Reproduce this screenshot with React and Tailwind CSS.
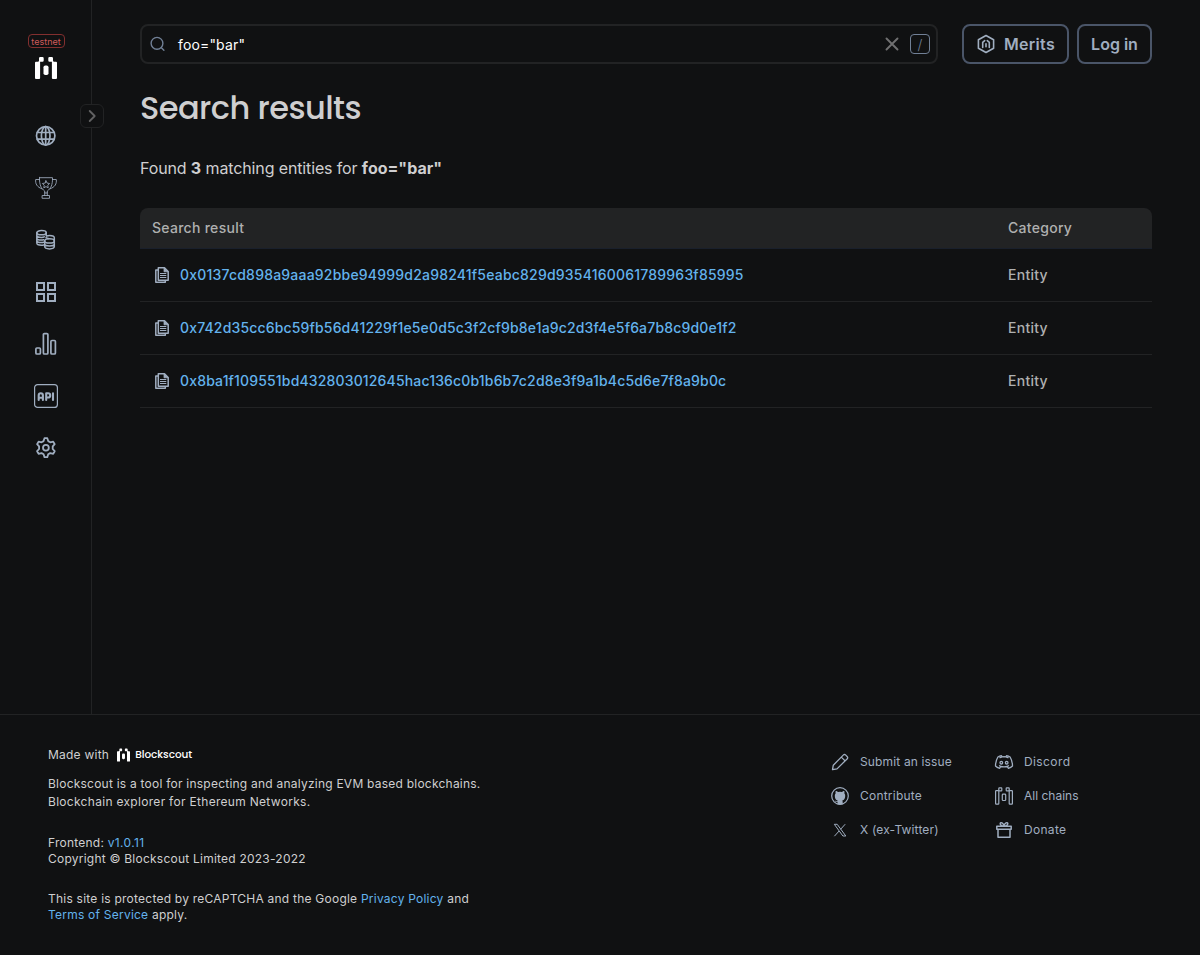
import React from "react";

const rows = [
  { hash: "0x0137cd898a9aaa92bbe94999d2a98241f5eabc829d9354160061789963f85995", tracking: "tracking-[0.205px]" },
  { hash: "0x742d35cc6bc59fb56d41229f1e5e0d5c3f2cf9b8e1a9c2d3f4e5f6a7b8c9d0e1f2", tracking: "tracking-[0.162px]" },
  { hash: "0x8ba1f109551bd432803012645hac136c0b1b6b7c2d8e3f9a1b4c5d6e7f8a9b0c", tracking: "tracking-[0.16px]" },
];

const stroke = { fill: "none", stroke: "currentColor", strokeLinecap: "round", strokeLinejoin: "round" };

function Logo({ className }) {
  return (
    <svg className={className} viewBox="0 0 22 22" fill="currentColor">
      <path d="M4 1.200A1.200 1.200 0 0 1 5.200 0h2.300a1.200 1.200 0 0 1 1.200 1.200v2.300a1.200 1.200 0 0 1-1.200 1.200H5.100V21a1 1 0 0 1-1 1H1a1 1 0 0 1-1-1V5.700a1 1 0 0 1 1-1h1.800A1.200 1.200 0 0 0 4 3.500z" />
      <path d="M18 1.200A1.200 1.200 0 0 0 16.800 0h-2.300a1.200 1.200 0 0 0-1.200 1.200v2.300a1.200 1.200 0 0 0 1.200 1.200h2.400V21a1 1 0 0 0 1 1H21a1 1 0 0 0 1-1V5.700a1 1 0 0 0-1-1h-1.800A1.200 1.200 0 0 1 18 3.500z" />
      <rect x="8.500" y="8.500" width="5" height="9.500" rx="1.800" />
    </svg>
  );
}

function Globe() {
  return (
    <svg className="size-6" viewBox="0 0 24 24" {...stroke} strokeWidth="1.700">
      <circle cx="11.700" cy="11.800" r="9.200" />
      <ellipse cx="11.700" cy="11.800" rx="4.300" ry="9.200" />
      <path d="M11.700 2.600V21M3.400 8.500h16.600M3.400 15.200h16.600" />
    </svg>
  );
}

function Trophy() {
  return (
    <svg className="size-6" viewBox="0 0 24 24" {...stroke} strokeWidth=".85">
      <path d="M5.500 1.700h13c.2 7-1.500 10.800-5.200 13.300v2h-2.600v-2C7 12.500 5.300 8.700 5.500 1.700z" />
      <path d="M5.500 3.500H1.700c-.5 4.300 1.300 7.600 6.200 9.300M18.500 3.500h3.800c.5 4.300-1.300 7.600-6.200 9.300M10.700 17v2.500M13.300 17v2.500M8.500 19.500h7v2.800h-7z" />
      <path d="M12 4.800l1.100 2.300 2.500.4-1.800 1.800.4 2.500-2.200-1.200-2.200 1.200.4-2.500-1.800-1.800 2.500-.4z" />
    </svg>
  );
}

function Coins() {
  return (
    <svg className="size-6" viewBox="0 0 24 24" {...stroke} strokeWidth="1.500">
      <ellipse cx="7.500" cy="4.700" rx="4.700" ry="2.100" />
      <path d="M2.800 4.700v10.400c0 1.300 2 2.200 4.700 2.200.8 0 1.500-.1 2.200-.3M12.200 4.700v3M2.800 7.300c0 1.300 2 2.100 4.700 2.100 1.100 0 2-.1 2.800-.5M2.800 9.900c0 1.300 2 2.100 4.700 2.100.8 0 1.500-.1 2.200-.3M2.800 12.500c0 1.300 2 2.100 4.700 2.100.8 0 1.500-.1 2.200-.3" />
      <ellipse cx="15.500" cy="12.900" rx="4.800" ry="2.200" />
      <path d="M10.700 12.900v5.700c0 1.300 2.100 2.300 4.800 2.300s4.800-1 4.800-2.300V9.800c0-1.300-2-2.300-4.700-2.300-1.200 0-2.200.2-3 .5M10.700 15.800c0 1.300 2.100 2.200 4.800 2.200s4.800-1 4.800-2.200M12 9.700c.8.500 1.600.7 2.500.7" />
    </svg>
  );
}

function Apps() {
  return (
    <svg className="size-6" viewBox="0 0 24 24" fill="none" stroke="currentColor" strokeWidth="2">
      <path d="M3 3h7v7H3zM14 3h7v7h-7zM3 14h7v7H3zM14 14h7v7h-7z" />
    </svg>
  );
}

function Stats() {
  return (
    <svg className="size-6" viewBox="0 0 24 24" fill="none" stroke="currentColor" strokeWidth="1.700">
      <rect x="1.900" y="16" width="4.500" height="6" rx="1" />
      <rect x="9.400" y="1.600" width="4.500" height="20.400" rx="1" />
      <rect x="16.900" y="8.500" width="4.500" height="13.500" rx="1" />
    </svg>
  );
}

function ApiIcon() {
  return (
    <svg className="size-6" viewBox="0 0 24 24" {...stroke} strokeWidth="1.200">
      <rect x=".6" y=".6" width="22.800" height="22.800" rx="3" />
      <g strokeWidth="2.100">
        <path d="M4.700 16v-4.600c0-1.300.8-2.100 2.100-2.100s2.100.8 2.100 2.100V16M4.700 13.700h4.200M12.200 16V9.300h1.900a2.100 2.100 0 0 1 0 4.200h-1.900M19 9.300V16" />
      </g>
    </svg>
  );
}

function Gear() {
  return (
    <svg className="size-6" viewBox="0 0 24 24" {...stroke} strokeWidth="1.800">
      <circle cx="11.900" cy="11.700" r="2.900" />
      <path d="M10.500 2.200h2.800l.9 2.900 2.100 1.200 2.900-.7 1.500 2.600-2 2.200v2.600l2 2.200-1.500 2.600-2.900-.7-2.100 1.200-.9 2.900h-2.800l-.9-2.900-2.100-1.200-2.900.7-1.500-2.600 2-2.200v-2.600l-2-2.200 1.500-2.600 2.900.7 2.100-1.200z" />
    </svg>
  );
}

function Docs() {
  return (
    <svg className="size-5 text-[#a0aec0]" viewBox="0 0 20 20" fill="none" stroke="currentColor" strokeWidth="1.500">
      <path d="M6.300 2.800h6.200l3.700 3.700v8.700H6.300z" strokeLinejoin="round" />
      <path d="M12 2.800v4h4.200z" fill="currentColor" strokeWidth=".8" />
      <path d="M6.300 5H3.800v12.200h9.500v-2" strokeLinejoin="round" />
      <path d="M8 8.500h6.300M8 10.500h6.300M8 12.500h6.300" strokeWidth="1" />
    </svg>
  );
}

function MeritsIcon() {
  return (
    <svg className="size-5" viewBox="0 0 20 20" {...stroke} strokeWidth="1.600">
      <path d="M10 1.500l7.600 4.300v8.400L10 18.500l-7.600-4.300V5.800z" />
      <path d="M6.700 13.500V8.300l2-1.700M13.300 13.500V8.300l-2-1.700M10 9.700v3" strokeWidth="1.600" />
    </svg>
  );
}

function Pencil() {
  return (
    <svg className="size-5" viewBox="0 0 20 20" {...stroke} strokeWidth="1.300">
      <path d="M2.500 17.700l.8-4.500L13.500 2.900a1.400 1.400 0 0 1 2 0l1.800 1.800a1.400 1.400 0 0 1 0 2L7 16.900zM11.300 5.100l3.800 3.800" />
    </svg>
  );
}

function Github() {
  return (
    <svg className="size-5" viewBox="0 0 20 20">
      <circle cx="10" cy="10" r="8.300" fill="none" stroke="currentColor" strokeWidth="1.200" />
      <path fill="currentColor" d="M7.500 18.500v-2.700c-1.800.4-2.500-.6-2.800-1.400.9-.1 1.300.9 2.100.9.400 0 .7-.2.900-.7C5.700 14 4.800 12.500 4.800 9.800c0-.9.200-1.700.8-2.300-.2-.8-.1-1.700.1-2.500 1 0 1.700.5 2.500 1a8 8 0 0 1 3.600 0c.8-.5 1.500-1 2.500-1 .2.800.3 1.700.1 2.500.6.600.8 1.400.8 2.300 0 2.700-.9 4.200-2.900 4.800.3.400.4.900.4 1.600v2.300z" />
    </svg>
  );
}

function XIcon() {
  return (
    <svg className="size-5" viewBox="0 0 20 20" fill="none" stroke="currentColor" strokeWidth="1">
      <path d="M4.300 4.300h2.900l8.600 11.700h-2.900zM15.200 4.200l-4.700 5.200M9.100 11l-4.700 5.200" />
    </svg>
  );
}

function Discord() {
  return (
    <svg className="size-5" viewBox="0 0 20 20" {...stroke} strokeWidth="1.300">
      <path d="M7.500 3.700c-1.500.2-2.500.6-3.600 1.300C2.300 7.700 1.500 10.700 1.500 14c1.100 1.200 2.500 1.900 4.200 2.300l1-1.800c2.200.6 4.400.6 6.600 0l1 1.800c1.700-.4 3.100-1.100 4.200-2.300 0-3.300-.8-6.300-2.400-9-1.100-.7-2.100-1.100-3.600-1.300l-.6 1.200a11 11 0 0 0-3.800 0zM5.500 13.800l1.200.7M14.500 13.800l-1.200.7M6 5.700l1.500-.6M14 5.700l-1.500-.6" />
      <circle cx="7.300" cy="10.700" r="1.300" />
      <circle cx="12.700" cy="10.700" r="1.300" />
    </svg>
  );
}

function Chains() {
  return (
    <svg className="size-5" viewBox="0 0 20 20" fill="none" stroke="currentColor" strokeWidth="1.200" strokeLinejoin="round">
      <rect x="1.600" y="4.700" width="3.200" height="13.500" rx=".6" />
      <rect x="15.200" y="4.700" width="3.200" height="13.500" rx=".6" />
      <rect x="4.800" y="1.800" width="3" height="3.100" rx=".6" />
      <rect x="12.200" y="1.800" width="3" height="3.100" rx=".6" />
      <rect x="8.300" y="8.200" width="3.400" height="6.300" rx=".8" />
    </svg>
  );
}

function Gift() {
  return (
    <svg className="size-5" viewBox="0 0 20 20" fill="none" stroke="currentColor" strokeWidth="1.500" strokeLinejoin="round">
      <path d="M2.800 6.200h14.400v3H2.800zM4 9.200h12v8H4zM10 6c-2 0-4-1-3.800-2.600C6.500 2 9.500 2.500 10 6zM10 6c2 0 4-1 3.800-2.600C13.500 2 10.500 2.500 10 6z" />
    </svg>
  );
}

const nav = [Globe, Trophy, Coins, Apps, Stats, ApiIcon, Gear];
const linkColumns = [
  [
    [Pencil, "Submit an issue", "tracking-[0.15px]"],
    [Github, "Contribute", "tracking-[0.22px]"],
    [XIcon, "X (ex-Twitter)", "tracking-[0.16px]"],
  ],
  [
    [Discord, "Discord", "tracking-[0.4px]"],
    [Chains, "All chains", "tracking-normal"],
    [Gift, "Donate", "tracking-[0.3px]"],
  ],
];

export default function App() {
  return (
    <div className="flex h-[955px] flex-col bg-[#101112] font-['Inter',sans-serif] text-base text-[#cfcfd0]">
      <div className="flex h-[714px]">
        <aside className="relative flex w-[92px] shrink-0 flex-col items-center border-r border-[#222324] pt-[34px]">
          <div className="ml-px flex h-[14px] w-[37px] items-center justify-center rounded-[4px] border border-[#822f2f] text-[9px] leading-none text-[#cf5b5b]">
            testnet
          </div>
          <Logo className="mt-[9px] h-[22px] w-[22px] text-white" />
          <nav className="mt-[45px] flex flex-col gap-7 text-[#a0aec0]">
            {nav.map((Icon, i) => (
              <Icon key={i} />
            ))}
          </nav>
          <button className="absolute top-[104px] -right-[13px] flex size-6 items-center justify-center rounded-md border border-[#222324] bg-[#101112] text-[#626263]">
            <svg className="size-4" viewBox="0 0 16 16" {...stroke} strokeWidth="1.800">
              <path d="M5.700 3l5 5-5 5" />
            </svg>
          </button>
        </aside>

        <main className="flex-1 pr-12 pl-12 pt-6">
          <div className="flex">
            <div className="flex h-10 w-[798px] items-center rounded-lg border-2 border-[#222324] pr-1.5 pl-2">
              <svg className="size-4 text-[#718096]" viewBox="0 0 16 16" {...stroke} strokeWidth="1.400">
                <circle cx="7" cy="7.300" r="5.900" />
                <path d="M11.400 11.700l2.500 2.500" />
              </svg>
              <span className="ml-3 flex-1 pt-0.5 text-sm leading-5 tracking-[0.15px] text-white">foo="bar"</span>
              <svg className="size-5 text-[#707071]" viewBox="0 0 20 20" {...stroke} strokeWidth="1.900">
                <path d="M4.500 4.500l11 11M15.500 4.500l-11 11" />
              </svg>
              <kbd className="ml-2 flex size-5 items-center justify-center rounded-[4px] border border-[#718096] pt-0.5 font-['Inter',sans-serif] text-sm font-light text-[#718096]">
                /
              </kbd>
            </div>
            <button className="ml-6 flex h-10 w-[107px] items-center justify-center gap-2 rounded-lg border-2 border-[#4a5568] font-semibold tracking-[0.3px] text-[#a0aec0]">
              <MeritsIcon />
              Merits
            </button>
            <button className="ml-2 flex h-10 w-[75px] items-center justify-center rounded-lg border-2 border-[#4a5568] font-semibold text-[#a0aec0]">
              Log in
            </button>
          </div>

          <h1 className="mt-6 font-['Poppins','Inter',sans-serif] text-[32px] leading-10 font-medium tracking-[-0.55px]">
            Search results
          </h1>
          <p className="mt-7 leading-6 tracking-[-0.13px]">
            Found <b className="tracking-normal">3</b> matching entities for <b className="tracking-normal">foo="bar"</b>
          </p>

          <section className="mt-7 text-sm font-medium tracking-[0.28px]">
            <div className="flex h-[41px] items-center rounded-t-lg border-b border-[#1a202c] bg-[#222324] px-3 text-[#afb0b0]">
              <span className="w-[856px]">Search result</span>
              <span>Category</span>
            </div>
            {rows.map(({ hash, tracking }) => (
              <div key={hash} className="flex h-[53px] items-center border-b border-[#222324] px-3">
                <div className="flex w-[856px] items-center gap-2">
                  <Docs />
                  <a className={"text-[#63b3ed] " + tracking}>{hash}</a>
                </div>
                <span className="text-[#afb0b0]">Entity</span>
              </div>
            ))}
          </section>
        </main>
      </div>

      <footer className="flex flex-1 justify-between border-t border-[#222324] px-12 pt-8 text-xs tracking-[0.23px]">
        <div>
          <div className="flex h-4 items-center">
            Made with
            <Logo className="ml-2 h-[14px] w-[13px] text-white" />
            <span className="ml-[5px] font-['Poppins','Inter',sans-serif] text-[10.500px] leading-4 font-medium tracking-[-0.05px] text-white">Blockscout</span>
          </div>
          <p className="mt-3 leading-[18px]">
            Blockscout is a tool for inspecting and analyzing EVM based blockchains.
            <br />
            <span className="tracking-[0.3px]">Blockchain explorer for Ethereum Networks.</span>
          </p>
          <p className="mt-6 leading-4">
            Frontend: <a className="tracking-[0.35px] text-[#63b3ed]">v1.0.11</a>
            <br />
            Copyright © Blockscout Limited 2023-2022
          </p>
          <p className="mt-6 leading-4">
            This site is protected by reCAPTCHA and the Google <a className="text-[#63b3ed]">Privacy Policy</a> and
            <br />
            <a className="text-[#63b3ed]">Terms of Service</a> apply.
          </p>
        </div>
        <div className="flex w-[322px] pt-[5px] text-[#a0aec0]">
          {linkColumns.map((col, i) => (
            <ul key={i} className="flex w-[164px] shrink-0 flex-col gap-3.5">
              {col.map(([Icon, label, tracking]) => (
                <li key={label} className={"flex h-5 items-center gap-2.5 " + tracking}>
                  <Icon />
                  {label}
                </li>
              ))}
            </ul>
          ))}
        </div>
      </footer>
    </div>
  );
}
